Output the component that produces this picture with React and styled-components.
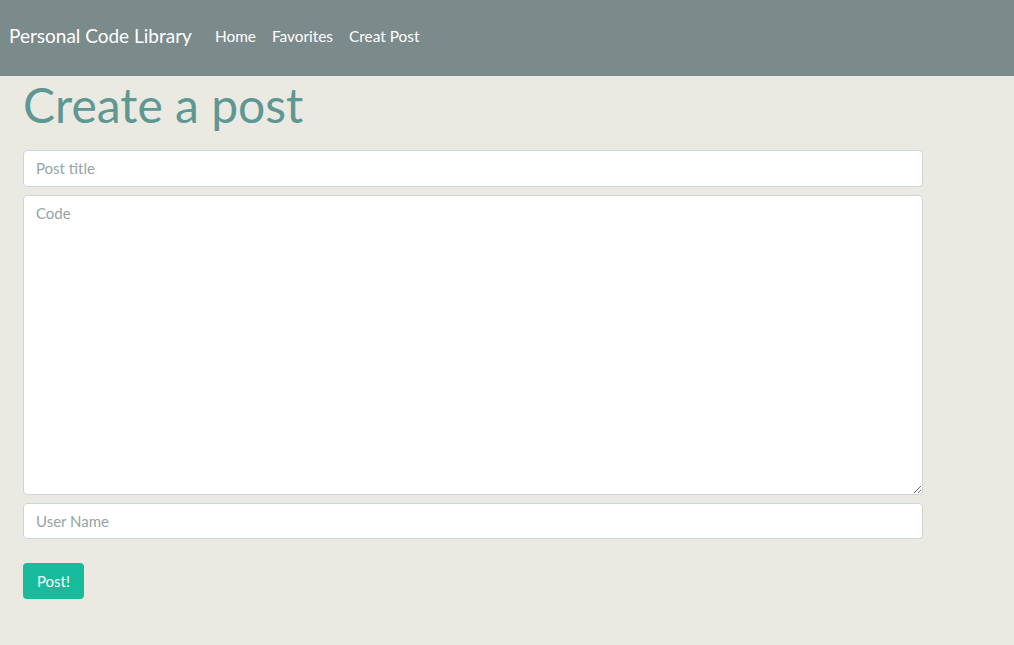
import React, { useState } from "react";
import styled, { createGlobalStyle } from "styled-components";

const GlobalStyle = createGlobalStyle`
  * { box-sizing: border-box; }
  body {
    margin: 0;
    background: #eaeae3;
    font-family: Lato, "Open Sans", sans-serif;
  }
`;

const Navbar = styled.nav`
  height: 76px;
  background: #7b8a8b;
  display: flex;
  align-items: center;
  padding: 0 9px 6px;
`;

const Brand = styled.a`
  color: #fff;
  font-size: 19px;
  text-decoration: none;
  margin-right: 23px;
`;

const NavList = styled.ul`
  display: flex;
  gap: 16px;
  list-style: none;
  margin: 0;
  padding: 0;
`;

const NavLink = styled.a`
  color: #fff;
  font-size: 15.4px;
  text-decoration: none;
`;

const Container = styled.main`
  padding: 0 23px;
  width: 946px;
`;

const Heading = styled.h1`
  margin: 0 0 16px;
  font-size: 48px;
  font-weight: 400;
  line-height: 1.2;
  color: #5f9793;
`;

const Form = styled.form`
  display: flex;
  flex-direction: column;
  gap: 8px;
`;

const fieldCss = `
  width: 100%;
  font-family: Lato, "Open Sans", sans-serif;
  font-size: 15px;
  color: #2c3e50;
  background: #fff;
  border: 1px solid #ced4da;
  border-radius: 4px;
  padding: 0 12px;
  outline: none;
  &::placeholder { color: #95a5a6; }
`;

const Input = styled.input`
  ${fieldCss}
  height: ${(p) => p.$h || 36}px;
`;

const TextArea = styled.textarea`
  ${fieldCss}
  height: 300px;
  padding-top: 8px;
`;

const Button = styled.button`
  align-self: flex-start;
  margin-top: 16px;
  height: 36px;
  padding: 0 14px;
  border: none;
  border-radius: 4px;
  background: #18bc9c;
  color: #fff;
  font-family: Lato, "Open Sans", sans-serif;
  font-size: 15px;
`;

export default function App() {
  const [post, setPost] = useState({ title: "", code: "", user: "" });
  const links = ["Home", "Favorites", "Creat Post"];
  return (
    <>
      <GlobalStyle />
      <Navbar>
        <Brand href="#">Personal Code Library</Brand>
        <NavList>
          {links.map((l) => (
            <li key={l}>
              <NavLink href="#">{l}</NavLink>
            </li>
          ))}
        </NavList>
      </Navbar>
      <Container>
        <Heading>Create a post</Heading>
        <Form onSubmit={(e) => e.preventDefault()}>
          <Input
            $h={37}
            placeholder="Post title"
            value={post.title}
            onChange={(e) => setPost({ ...post, title: e.target.value })}
          />
          <TextArea
            placeholder="Code"
            value={post.code}
            onChange={(e) => setPost({ ...post, code: e.target.value })}
          />
          <Input
            placeholder="User Name"
            value={post.user}
            onChange={(e) => setPost({ ...post, user: e.target.value })}
          />
          <Button type="submit">Post!</Button>
        </Form>
      </Container>
    </>
  );
}
